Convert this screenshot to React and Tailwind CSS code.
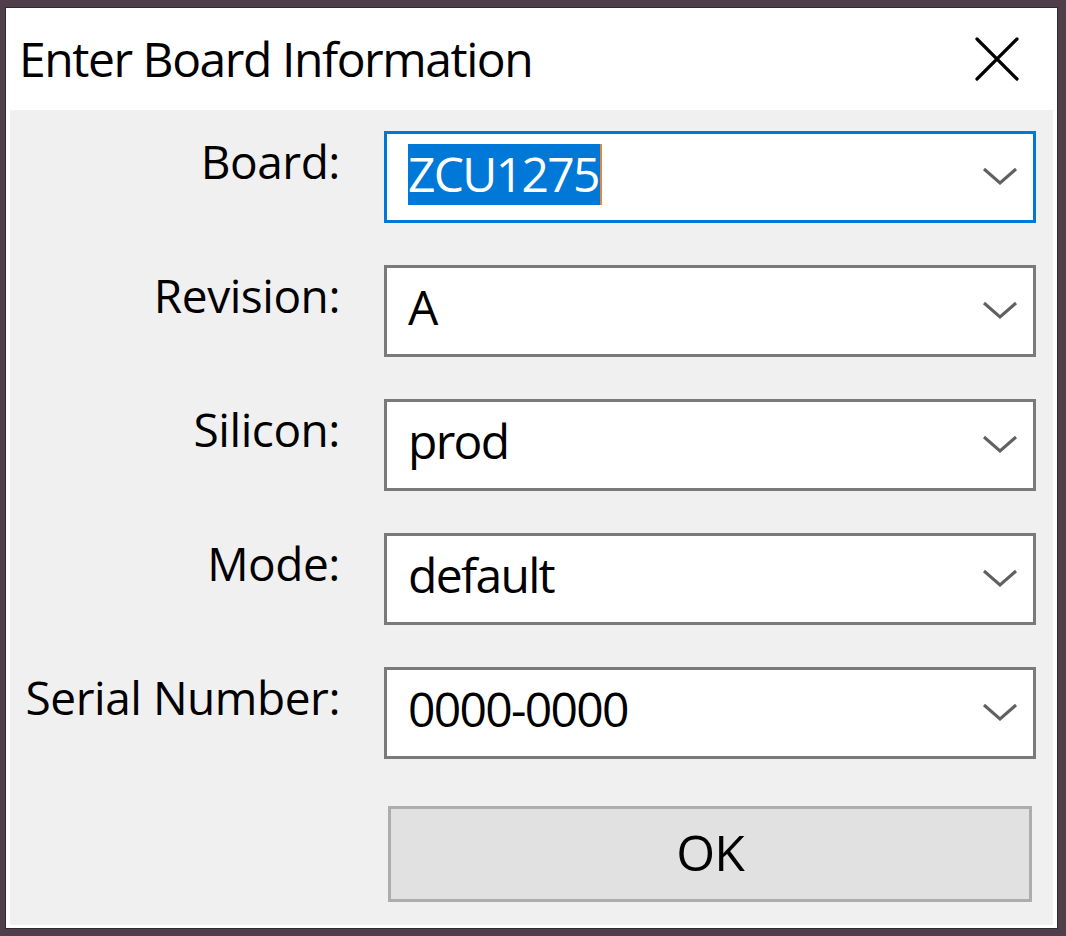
import { useState } from 'react';

const fields = [
  { label: 'Board:', value: 'ZCU1275', focused: true },
  { label: 'Revision:', value: 'A' },
  { label: 'Silicon:', value: 'prod' },
  { label: 'Mode:', value: 'default' },
  { label: 'Serial Number:', value: '0000-0000' },
];

function Chevron() {
  return (
    <svg width="36" height="20" viewBox="0 0 36 20" className="shrink-0 mt-[6px]">
      <polyline points="2,3 18,17 34,3" fill="none" stroke="#606060" strokeWidth="3" />
    </svg>
  );
}

function CloseIcon() {
  return (
    <svg width="44" height="44" viewBox="0 0 44 44">
      <path d="M2 2L42 42M42 2L2 42" stroke="#000" strokeWidth="3.2" strokeLinecap="round" />
    </svg>
  );
}

function ComboBox({ value, focused }) {
  return (
    <div
      className={`h-[92px] flex items-center justify-between bg-white pl-[21px] pr-[15px] pb-[8px] border-[3px] ${
        focused ? 'border-[#0078d7]' : 'border-[#7a7a7a]'
      }`}
    >
      {focused ? (
        <span className="relative flex items-center h-[61px] bg-[#0078d7] text-white pr-[3px] mt-[2px]">
          {value}
          <span className="absolute right-0 top-0 bottom-0 w-[2px] bg-[#e8853a]" />
        </span>
      ) : (
        <span className="text-black">{value}</span>
      )}
      <Chevron />
    </div>
  );
}

export default function App() {
  const [rows] = useState(fields);

  return (
    <div
      className="w-[1066px] h-[936px] bg-[#4e3f4b] pt-[7px] pl-[5px] pr-[8px] pb-[7px]"
      style={{ fontFamily: '"Open Sans", "Noto Sans", sans-serif' }}
    >
      <div className="h-full flex flex-col bg-white border border-[#2e2a2e]">
        {/* Title bar */}
        <div className="h-[102px] shrink-0 flex items-center justify-between pl-[13px] pr-[38px]">
          <span className="text-[48px] tracking-[-0.03em] text-black leading-none">
            Enter Board Information
          </span>
          <CloseIcon />
        </div>

        {/* Body */}
        <div className="flex-1 mx-[4px] mb-[3px] bg-[#f0f0f0] pt-[21px] pr-[17px]">
          <div className="grid grid-cols-[330px_652px] gap-x-[44px] gap-y-[42px]">
            {rows.map((f) => (
              <div key={f.label} className="contents">
                <div className="text-right text-[46px] tracking-[-0.01em] leading-none text-black pt-[7px]">
                  {f.label}
                </div>
                <div className="text-[48px] tracking-[-0.035em] leading-none">
                  <ComboBox value={f.value} focused={f.focused} />
                </div>
              </div>
            ))}
            <div />
            <div className="px-[4px] pt-[5px]">
              <button className="w-full h-[96px] bg-[#e1e1e1] border-[3px] border-[#adadad] text-[50px] tracking-[-0.02em] text-black leading-none pb-[4px]">
                OK
              </button>
            </div>
          </div>
        </div>
      </div>
    </div>
  );
}
